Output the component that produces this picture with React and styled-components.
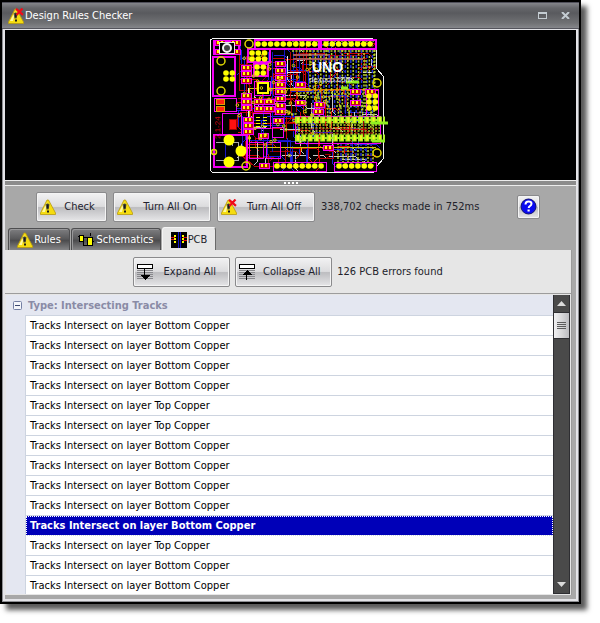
import { useState } from "react";
import styled, { createGlobalStyle, css } from "styled-components";

const GlobalStyle = createGlobalStyle`
  * {
    box-sizing: border-box;
  }
  body {
    margin: 0;
    background: #fff;
    color: #000;
    font-family: "DejaVu Sans Condensed", "Noto Sans", sans-serif;
    font-size: 11px;
  }
  button {
    padding: 0;
    border: 0;
    background: none;
    color: inherit;
    font: inherit;
  }
`;

const Desktop = styled.main`
  display: flex;
  height: 100vh;
  min-height: 400px;
  padding: 0 19px 19px 0;
`;

const Window = styled.section`
  flex: 1;
  display: flex;
  flex-direction: column;
  min-width: 0;
  border: 2px solid #000;
  box-shadow: 6px 6px 5px rgba(0, 0, 0, 0.65);
  background: #8f9094;
`;

const TitleBar = styled.header`
  flex: none;
  display: flex;
  align-items: center;
  gap: 1px;
  height: 27px;
  padding: 0 3px 0 6px;
  border-top: 1px solid #50505a;
  border-bottom: 1px solid #54545c;
  background: linear-gradient(#84858a, #66676b 20%, #595a5e 40%, #707174 80%, #85868a);
  color: #fff;
`;

const Title = styled.h1`
  flex: 1;
  margin: 0;
  font-size: 11px;
  font-weight: normal;
`;

const WindowButton = styled.button`
  display: flex;
  width: 22px;
  height: 20px;
  align-items: center;
  justify-content: center;
`;

const Body = styled.div`
  flex: 1;
  display: flex;
  flex-direction: column;
  min-height: 0;
  margin: 0 1px 1px;
  border: 2px solid #e4e4e8;
  border-top-width: 1px;
  background: #a8a8a8;
`;

const BoardView = styled.div`
  flex: none;
  display: flex;
  justify-content: center;
  height: 150px;
  background: #000;
`;

const Splitter = styled.div`
  flex: none;
  display: flex;
  align-items: center;
  justify-content: center;
  gap: 2px;
  height: 6px;
  border: solid #ececec;
  border-width: 1px 0;
  background: #8c8c8c;
`;

const Grip = styled.i`
  width: 2px;
  height: 2px;
  background: #fff;
`;

const Toolbar = styled.div`
  flex: none;
  display: flex;
  align-items: center;
  gap: 6px;
  height: 41px;
  padding: 0 36px 0 31px;
`;

const PushButton = styled.button`
  flex: none;
  display: flex;
  align-items: center;
  width: ${({ $width }) => $width}px;
  height: 30px;
  padding: 0 3px;
  border: 1px solid #8a8a8c;
  border-radius: 2px;
  box-shadow: inset 0 0 0 1px #f4f4f4;
  background: linear-gradient(#f2f2f3, #dcdcde 48%, #bdbdc0 52%, #e6e6e8);
  color: #22222e;
`;

const ButtonText = styled.span`
  flex: 1;
  text-align: center;
`;

const HelpButton = styled(PushButton)`
  justify-content: center;
  height: 24px;
  margin-left: auto;
  padding: 0;
`;

const Status = styled.output`
  color: #22222a;
`;

const TabList = styled.div`
  flex: none;
  display: flex;
  align-items: flex-end;
  gap: 1px;
  height: 23px;
  padding-left: 3px;
`;

const Tab = styled.button`
  display: flex;
  align-items: center;
  justify-content: center;
  gap: 1px;
  width: ${({ $width }) => $width}px;
  height: 22px;
  border: 1px solid #4e4e50;
  border-bottom: 0;
  border-radius: 3px 3px 0 0;
  box-shadow: inset 1px 1px 0 #98989a;
  background: linear-gradient(#7e7e80, #5a5a5c 45%, #4c4c4e 55%, #858587);
  color: #fff;
  ${({ $active }) =>
    $active &&
    css`
      height: 24px;
      margin-bottom: -1px;
      border-color: #f4f4f4 #6a6a6a #f4f4f4 #f4f4f4;
      box-shadow: none;
      background: #e6e6e6;
      color: #22222a;
    `}
`;

const Panel = styled.div`
  flex: 1;
  display: flex;
  flex-direction: column;
  min-height: 0;
  margin: 0 4px 4px 0;
  border-right: 1px solid #9a9a9a;
  background: #e6e6e6;
`;

const PanelBar = styled.div`
  flex: none;
  display: flex;
  align-items: center;
  justify-content: center;
  gap: 5px;
  height: 44px;
  border-bottom: 1px solid #9c9c9c;
`;

const Results = styled.div`
  flex: 1;
  display: flex;
  min-height: 0;
  padding: 1px;
`;

const Groups = styled.div`
  flex: 1;
  min-width: 0;
  overflow: hidden;
  background: #e4e7f1;
`;

const GroupHeader = styled.h2`
  display: flex;
  align-items: center;
  gap: 6px;
  height: 20px;
  margin: 0;
  padding: 1px 0 0 7px;
  color: #8a8ba6;
  font-size: 11px;
`;

const Toggle = styled.button`
  display: flex;
`;

const Errors = styled.ul`
  margin: 0 0 0 19px;
  padding: 0;
  border: solid #cdd4e0;
  border-width: 1px 0 0 1px;
  list-style: none;
`;

const ErrorRow = styled.button`
  display: block;
  width: 100%;
  height: 20px;
  padding: 0 0 1px 4px;
  border-bottom: 1px solid #cdd4e0;
  background: #fff;
  text-align: left;
  ${({ $selected }) =>
    $selected &&
    css`
      outline: 1px dotted #fff;
      outline-offset: -1px;
      background: #0000b8;
      color: #fff;
      font-weight: bold;
    `}
`;

const ScrollBar = styled.div`
  flex: none;
  display: flex;
  flex-direction: column;
  width: 17px;
  border: solid #2e2e32;
  border-width: 0 1px 1px;
  background: #4a4a4a;
`;

const ScrollArrow = styled.button`
  display: flex;
  height: 17px;
  align-items: center;
  justify-content: center;
`;

const Thumb = styled.div`
  display: flex;
  flex-direction: column;
  align-items: center;
  justify-content: center;
  gap: 1px;
  height: 27px;
  margin-bottom: auto;
  border: solid #2e2e32;
  border-width: 1px 0;
  background: linear-gradient(90deg, #f0f0f2, #d8d8da 50%, #bcbcc0);
  i {
    width: 9px;
    height: 1px;
    background: #5c5c5c;
  }
`;

const WarningIcon = ({ crossed }) => (
  <svg width="16" height="16" viewBox="0 0 16 16" aria-hidden="true">
    <path d="M7 1h1.500l7 13v1.500h-15V14z" fill="#f5dc10" stroke="#b89a10" strokeWidth=".8" />
    <path d="M7.500 2.500l-5.500 10.500h3z" fill="#fff9a0" />
    <path d="M5.500 5.500q2-2 4 0l-1 5h-2z" fill="#555540" />
    <path d="M7 5.500h1.500v4H7zM7 11.500h2v2H7z" fill="#1b1b18" />
    {crossed && (
      <path d="M8 .8l7 6M14.500.5L8.500 7" stroke="#f00c18" strokeWidth="2.200" fill="none" />
    )}
  </svg>
);

const SchematicIcon = () => (
  <svg width="17" height="16" viewBox="0 0 17 16" shapeRendering="crispEdges" aria-hidden="true">
    <path d="M0 4h2M6 5h3v7M5 8v5h4M12 4V1M14 9h2" stroke="#000" fill="none" />
    <rect x="1.500" y="3.500" width="4" height="6" fill="#ff0" stroke="#000" />
    <rect x="9.500" y="5.500" width="5" height="8" fill="#ff0" stroke="#000" />
  </svg>
);

const PcbIcon = () => (
  <svg width="16" height="16" viewBox="0 0 16 16" shapeRendering="crispEdges" aria-hidden="true">
    <path d="M0 0h16v16H0z" />
    <path d="M7.500 0v16M9.500 0v16" stroke="#1414c8" />
    <path d="M0 5.500h4M0 7.500h4M12 5.500h4M12 8.500h4" stroke="#e01010" />
    <path
      d="M3 3h2v2H3zM3 6h2v2H3zM3 9h2v2H3zM11 3h2v2h-2zM11 6h2v2h-2zM11 9h2v2h-2z"
      fill="#ff0"
    />
  </svg>
);

const FoldIcon = ({ up }) => (
  <svg width="16" height="16" viewBox="0 0 16 16" shapeRendering="crispEdges" aria-hidden="true">
    <path d="M0 6.500h16M0 8.500h16M0 10.500h16M0 12.500h16M0 14.500h16" stroke="#88888c" />
    <rect x=".5" y=".5" width="15" height="4" fill="#fff" stroke="#000" />
    {up ? (
      <path d="M7 16v-5H3l5-5 5 5H8v5z" />
    ) : (
      <path d="M7 5h1v6h5l-5 5-5-5h4z" />
    )}
  </svg>
);

const HelpIcon = () => (
  <svg width="17" height="17" viewBox="0 0 17 17" aria-hidden="true">
    <circle cx="8.500" cy="8.500" r="7.500" fill="#0a0af0" stroke="#101070" />
    <path d="M5.500 6.500q0-3 3-3t3 2.300q0 1.500-1.600 2.300-1.200.7-1.200 2" fill="none" stroke="#fff" strokeWidth="2" />
    <path d="M7.500 11.500h2.200v2H7.500z" fill="#fff" />
  </svg>
);

const range = (n) => Array.from({ length: n }, (_, i) => i);

// repeatable noise, so that the routed tracks stay the same on each render
const noise = (n) => {
  const v = Math.sin(n * 127.1) * 43758.5453;
  return v - Math.floor(v);
};

const TRACK_COLORS = ["#d00000", "#1818e0", "#a00000", "#d00008", "#2020e0", "#e01010", "#c8c8c8"];

const tracks = range(210).map((i) => {
  const x = Math.round(236 + noise(i) * 130);
  const y = Math.round(42 + noise(i + 300) * 118);
  const length = Math.round(5 + noise(i + 600) * 22);
  const bend = i % 3 ? 4 : -4;
  const end = Math.min(y + length, 168);
  const d =
    i % 2 ? `M${x} ${y}V${end}l${bend} 4` : `M${x} ${y}h${Math.min(length, 376 - x)}l${bend} 4`;
  return { d, color: TRACK_COLORS[i % 7] };
});

const vias = range(60).map((i) => [236 + noise(i + 50) * 90, 54 + noise(i + 90) * 104]);

const chips = [
  [241, 65], [241, 71], [241, 78], [241, 93], [241, 99], [241, 105],
  [275, 61], [275, 68], [275, 75], [275, 82], [275, 89], [275, 96], [275, 103], [275, 109],
  [254, 99], [264, 99], [254, 106], [264, 106], [243, 117], [243, 123], [243, 129],
  [273, 118], [258, 133], [259, 163], [215, 40], [230, 40], [215, 49], [230, 49],
  [295, 82], [295, 100], [314, 102], [313, 109], [323, 145], [350, 89], [350, 100], [365, 89],
];

const Pads = ({ x, y, count }) =>
  range(count).map((i) => <circle key={i} cx={x + i * 6.300} cy={y} r="2.800" fill="#ff0" />);

const Board = () => (
  <svg width="195" height="150" viewBox="193 30 195 150" role="img" aria-label="Board layout">
    <g fill="none" shapeRendering="crispEdges">
      {tracks.map(({ d, color }, i) => (
        <path key={i} d={d} stroke={color} />
      ))}
      <path
        d="M239 52v38h10v16M246 56v60M252 62h24v14M238 98h56l8 8M240 112h50M262 48v20h14M270 76h20v24M290 52v52M296 52v60M303 52v34M309 58h58M240 154l14 12h60M268 154v12M285 150v14M333 141v17h-13M297 55h66M297 58h44"
        stroke="#b80008"
      />
      <path
        d="M240 40v20M244 56v36M268 52v28M272 52v100M284 50v80M293 50v40M299 50v34M242 116v40M250 140h40v16M306 150v14M292 146v18M225 140v20h14M320 90v20M345 90v24M263 94v60M236 108h50"
        stroke="#1616c4"
      />
      <path
        d="M210.500 39.500l3-1h159l4 3v27l7 8v82l-7 8v4l-3 2h-161l-2-2z"
        stroke="#f4f4f4"
      />
      <path d="M248 118v-30M287 72h14M287 56v15M363 72h12M371 59v7" stroke="#e8e8e8" />
      <path d="M290 89.500h88" stroke="#e87800" strokeWidth="2" />
      <path d="M249 88v62M250 88.500h60M238 147.500h138M301 151v-4" stroke="#d8c800" strokeWidth="1" />
      <path d="M293 54.500h37M293 58.500h70" stroke="#a85858" strokeWidth="2" />
    </g>

    <g stroke="#2434d0" fill="none" strokeDasharray="3 2" strokeWidth="1.500">
      {range(12).map((i) => (
        <path key={i} d={`M${313 + i * 5.400} 50v66`} />
      ))}
      {range(7).map((i) => (
        <path key={i} d={`M${341 + i * 5} 143v22`} />
      ))}
    </g>
    <g stroke="#b8d428" fill="none" strokeDasharray="2 1.500" strokeWidth="1.500">
      {range(13).map((i) => (
        <path
          key={i}
          d={`M${310 + i * 5.400} ${50 + (i % 3) * 3}v${34 + noise(i + 8) * 26}l${i % 2 ? 4 : -4} 6v18`}
        />
      ))}
      <path d="M292 51h82M298 125h84M298 128h82M298 131h82M298 134h82M296 93h38l6 8M300 97h30M292 41h82" />
      <path d="M286 110l8 6M284 114h12v20M334 94h40M336 106h34M366 60v54M374 54v64" />
      {range(8).map((i) => (
        <path key={i} d={`M${338 + i * 5} ${143 + (i % 2) * 4}v20`} />
      ))}
    </g>
    <path
      d="M300 129h78M300 133h76M312 104v10M322 92v20M358 92v22"
      stroke="#c02010"
      strokeDasharray="3 2"
    />

    <g fill="none" stroke="#f400f4" shapeRendering="crispEdges">
      <path
        d="M214 41h25v13h-25zM213 57h22v39h-22zM248 49h22v13h-22zM254 64h14v12h-14zM255 40h64v9h-64zM321 40h55v9h-55zM214 135h33v32h-33z"
        strokeWidth="1.500"
      />
      <path d="M214 98h22v13h-22zM222 113h19v22h-19zM249 142h14v16h-14zM266 142h14v16h-14zM254 81h16v14h-16zM253 113h17v15h-17zM272 127h11v10h-11zM273 162h53v9h-53zM334 162h42v9h-42zM295 116h85v27h-85zM366 89h12v30h-12z" />
    </g>

    {chips.map(([x, y], i) => (
      <g key={i} shapeRendering="crispEdges">
        <rect x={x} y={y} width="10" height="5" fill="#c01010" stroke="#f400f4" />
        <path d={`M${x + 2} ${y + 1}h2v3h-2zM${x + 6} ${y + 1}h2v3h-2z`} fill="#ff0" />
      </g>
    ))}

    <g shapeRendering="crispEdges">
      <rect x="219" y="42" width="15" height="11" fill="#000" stroke="#e8e8e8" />
      <rect x="258" y="83" width="10" height="10" fill="#000" stroke="#ff0" strokeWidth="2" />
      <path d="M216 99h8v5h-8zM216 106h8v5h-8z" fill="#ff2010" stroke="#e0a000" />
      <path d="M229 119h7v10h-7z" fill="#ff1010" stroke="#a00000" />
      <path d="M256 117h12M256 120h12M256 123h12M256 126h12" stroke="#ff0" strokeDasharray="4 3" />
      <path d="M216 142h22v18h-22M232 141v5M229 158v6" stroke="#aaa" fill="none" />
    </g>
    <circle cx="227" cy="48" r="4" fill="#444" stroke="#f4f4f4" strokeWidth="2" />

    <g fill="none" stroke="#e0d800" strokeWidth="1.500">
      <circle cx="249" cy="44" r="4" />
      <circle cx="221" cy="61" r="4" />
      <circle cx="221" cy="91" r="4" />
      <circle cx="246" cy="166" r="4" />
      <circle cx="214" cy="152" r="2.500" />
      <circle cx="377" cy="83" r="4" />
      <circle cx="377" cy="153" r="4" />
      {vias.map(([x, y], i) => (
        <circle key={i} cx={x} cy={y} r="1.300" strokeWidth="1" />
      ))}
    </g>
    <g fill="#ff0">
      <circle cx="229" cy="140" r="5.500" />
      <circle cx="241" cy="151" r="5.500" />
      <circle cx="229" cy="162" r="5.500" />
    </g>
    <Pads x={258} y={44} count={10} />
    <Pads x={326} y={44} count={8} />
    <Pads x={252} y={53} count={3} />
    <Pads x={252} y={59} count={3} />
    <Pads x={257} y={67} count={2} />
    <Pads x={257} y={73} count={2} />
    <Pads x={226} y={73} count={2} />
    <Pads x={226} y={79} count={2} />
    <Pads x={277} y={166} count={8} />
    <Pads x={339} y={166} count={6} />
    <Pads x={369} y={96} count={2} />
    <Pads x={369} y={102} count={2} />
    <Pads x={369} y={108} count={2} />

    {[120, 138].map((y) => (
      <g key={y}>
        <path d={`M295 ${y}h90`} stroke="#a8f020" strokeWidth="7" strokeDasharray="5 1.300" />
        <path d={`M295 ${y}h86`} stroke="#a8f020" strokeWidth="2" />
        <path d={`M297 ${y}h84`} stroke="#f4f420" strokeWidth="5" strokeDasharray="2 4.300" />
      </g>
    ))}
    <path
      d="M346 82h13M341 88h7M371 123h17M372 141h13"
      stroke="#90f020"
      strokeWidth="3"
      fill="none"
    />

    <text x="312" y="72" fill="#fff" fontSize="14" fontWeight="bold" fontFamily="Liberation Sans">
      UNO
    </text>
    <text x="309" y="82" fill="#f0f0f0" fontSize="8" fontFamily="Liberation Sans">
      dexpcp.com
    </text>
    <text
      transform="translate(220 139) rotate(-90)"
      fill="#d00010"
      fontSize="8"
      fontFamily="Liberation Sans"
    >
      2.1-24
    </text>
  </svg>
);

const TABS = [
  { name: "Rules", width: 62, icon: <WarningIcon /> },
  { name: "Schematics", width: 90, icon: <SchematicIcon /> },
  { name: "PCB", width: 54, icon: <PcbIcon /> },
];

const LAYERS = [
  "Bottom", "Bottom", "Bottom", "Bottom", "Top", "Top", "Bottom",
  "Bottom", "Bottom", "Bottom", "Bottom", "Top", "Bottom", "Bottom",
];

export default function App() {
  const [tab, setTab] = useState("PCB");
  const [selected, setSelected] = useState(10);
  const [open, setOpen] = useState(true);

  return (
    <>
      <GlobalStyle />
      <Desktop>
        <Window>
          <TitleBar>
            <WarningIcon crossed />
            <Title>Design Rules Checker</Title>
            <WindowButton aria-label="Maximize">
              <svg width="9" height="7" shapeRendering="crispEdges">
                <path d="M.5.500h8v6h-8zM0 1.500h9" fill="none" stroke="#c4ccd2" />
              </svg>
            </WindowButton>
            <WindowButton aria-label="Close">
              <svg width="9" height="7">
                <path d="M1 0l7 7M8 0L1 7" stroke="#c4ccd2" strokeWidth="2" />
              </svg>
            </WindowButton>
          </TitleBar>
          <Body>
            <BoardView>
              <Board />
            </BoardView>
            <Splitter>
              {range(4).map((i) => (
                <Grip key={i} />
              ))}
            </Splitter>
            <Toolbar>
              <PushButton $width={71}>
                <WarningIcon />
                <ButtonText>Check</ButtonText>
              </PushButton>
              <PushButton $width={98}>
                <WarningIcon />
                <ButtonText>Turn All On</ButtonText>
              </PushButton>
              <PushButton $width={98}>
                <WarningIcon crossed />
                <ButtonText>Turn All Off</ButtonText>
              </PushButton>
              <Status>338,702 checks made in 752ms</Status>
              <HelpButton $width={23} aria-label="Help">
                <HelpIcon />
              </HelpButton>
            </Toolbar>
            <TabList role="tablist">
              {TABS.map(({ name, width, icon }) => (
                <Tab
                  key={name}
                  role="tab"
                  aria-selected={tab === name}
                  $active={tab === name}
                  $width={width}
                  onClick={() => setTab(name)}
                >
                  {icon}
                  {name}
                </Tab>
              ))}
            </TabList>
            <Panel role="tabpanel">
              <PanelBar>
                <PushButton $width={97} onClick={() => setOpen(true)}>
                  <FoldIcon />
                  <ButtonText>Expand All</ButtonText>
                </PushButton>
                <PushButton $width={97} onClick={() => setOpen(false)}>
                  <FoldIcon up />
                  <ButtonText>Collapse All</ButtonText>
                </PushButton>
                <Status>126 PCB errors found</Status>
              </PanelBar>
              <Results>
                <Groups>
                  <GroupHeader>
                    <Toggle aria-label="Toggle group" onClick={() => setOpen(!open)}>
                      <svg width="9" height="9">
                        <rect x=".5" y=".5" width="8" height="8" rx="1" fill="#f4f6fb" stroke="#7480a4" />
                        <path d="M2 4.500h5" stroke="#3c4870" />
                      </svg>
                    </Toggle>
                    Type: Intersecting Tracks
                  </GroupHeader>
                  {open && (
                    <Errors>
                      {LAYERS.map((layer, i) => (
                        <li key={i}>
                          <ErrorRow $selected={i === selected} onClick={() => setSelected(i)}>
                            Tracks Intersect on layer {layer} Copper
                          </ErrorRow>
                        </li>
                      ))}
                    </Errors>
                  )}
                </Groups>
                <ScrollBar>
                  <ScrollArrow aria-label="Scroll up">
                    <svg width="9" height="5">
                      <path d="M0 5l4.500-5L9 5z" fill="#dcdcdc" />
                    </svg>
                  </ScrollArrow>
                  <Thumb>
                    <i />
                    <i />
                    <i />
                    <i />
                  </Thumb>
                  <ScrollArrow aria-label="Scroll down">
                    <svg width="9" height="5">
                      <path d="M0 0h9L4.500 5z" fill="#dcdcdc" />
                    </svg>
                  </ScrollArrow>
                </ScrollBar>
              </Results>
            </Panel>
          </Body>
        </Window>
      </Desktop>
    </>
  );
}
